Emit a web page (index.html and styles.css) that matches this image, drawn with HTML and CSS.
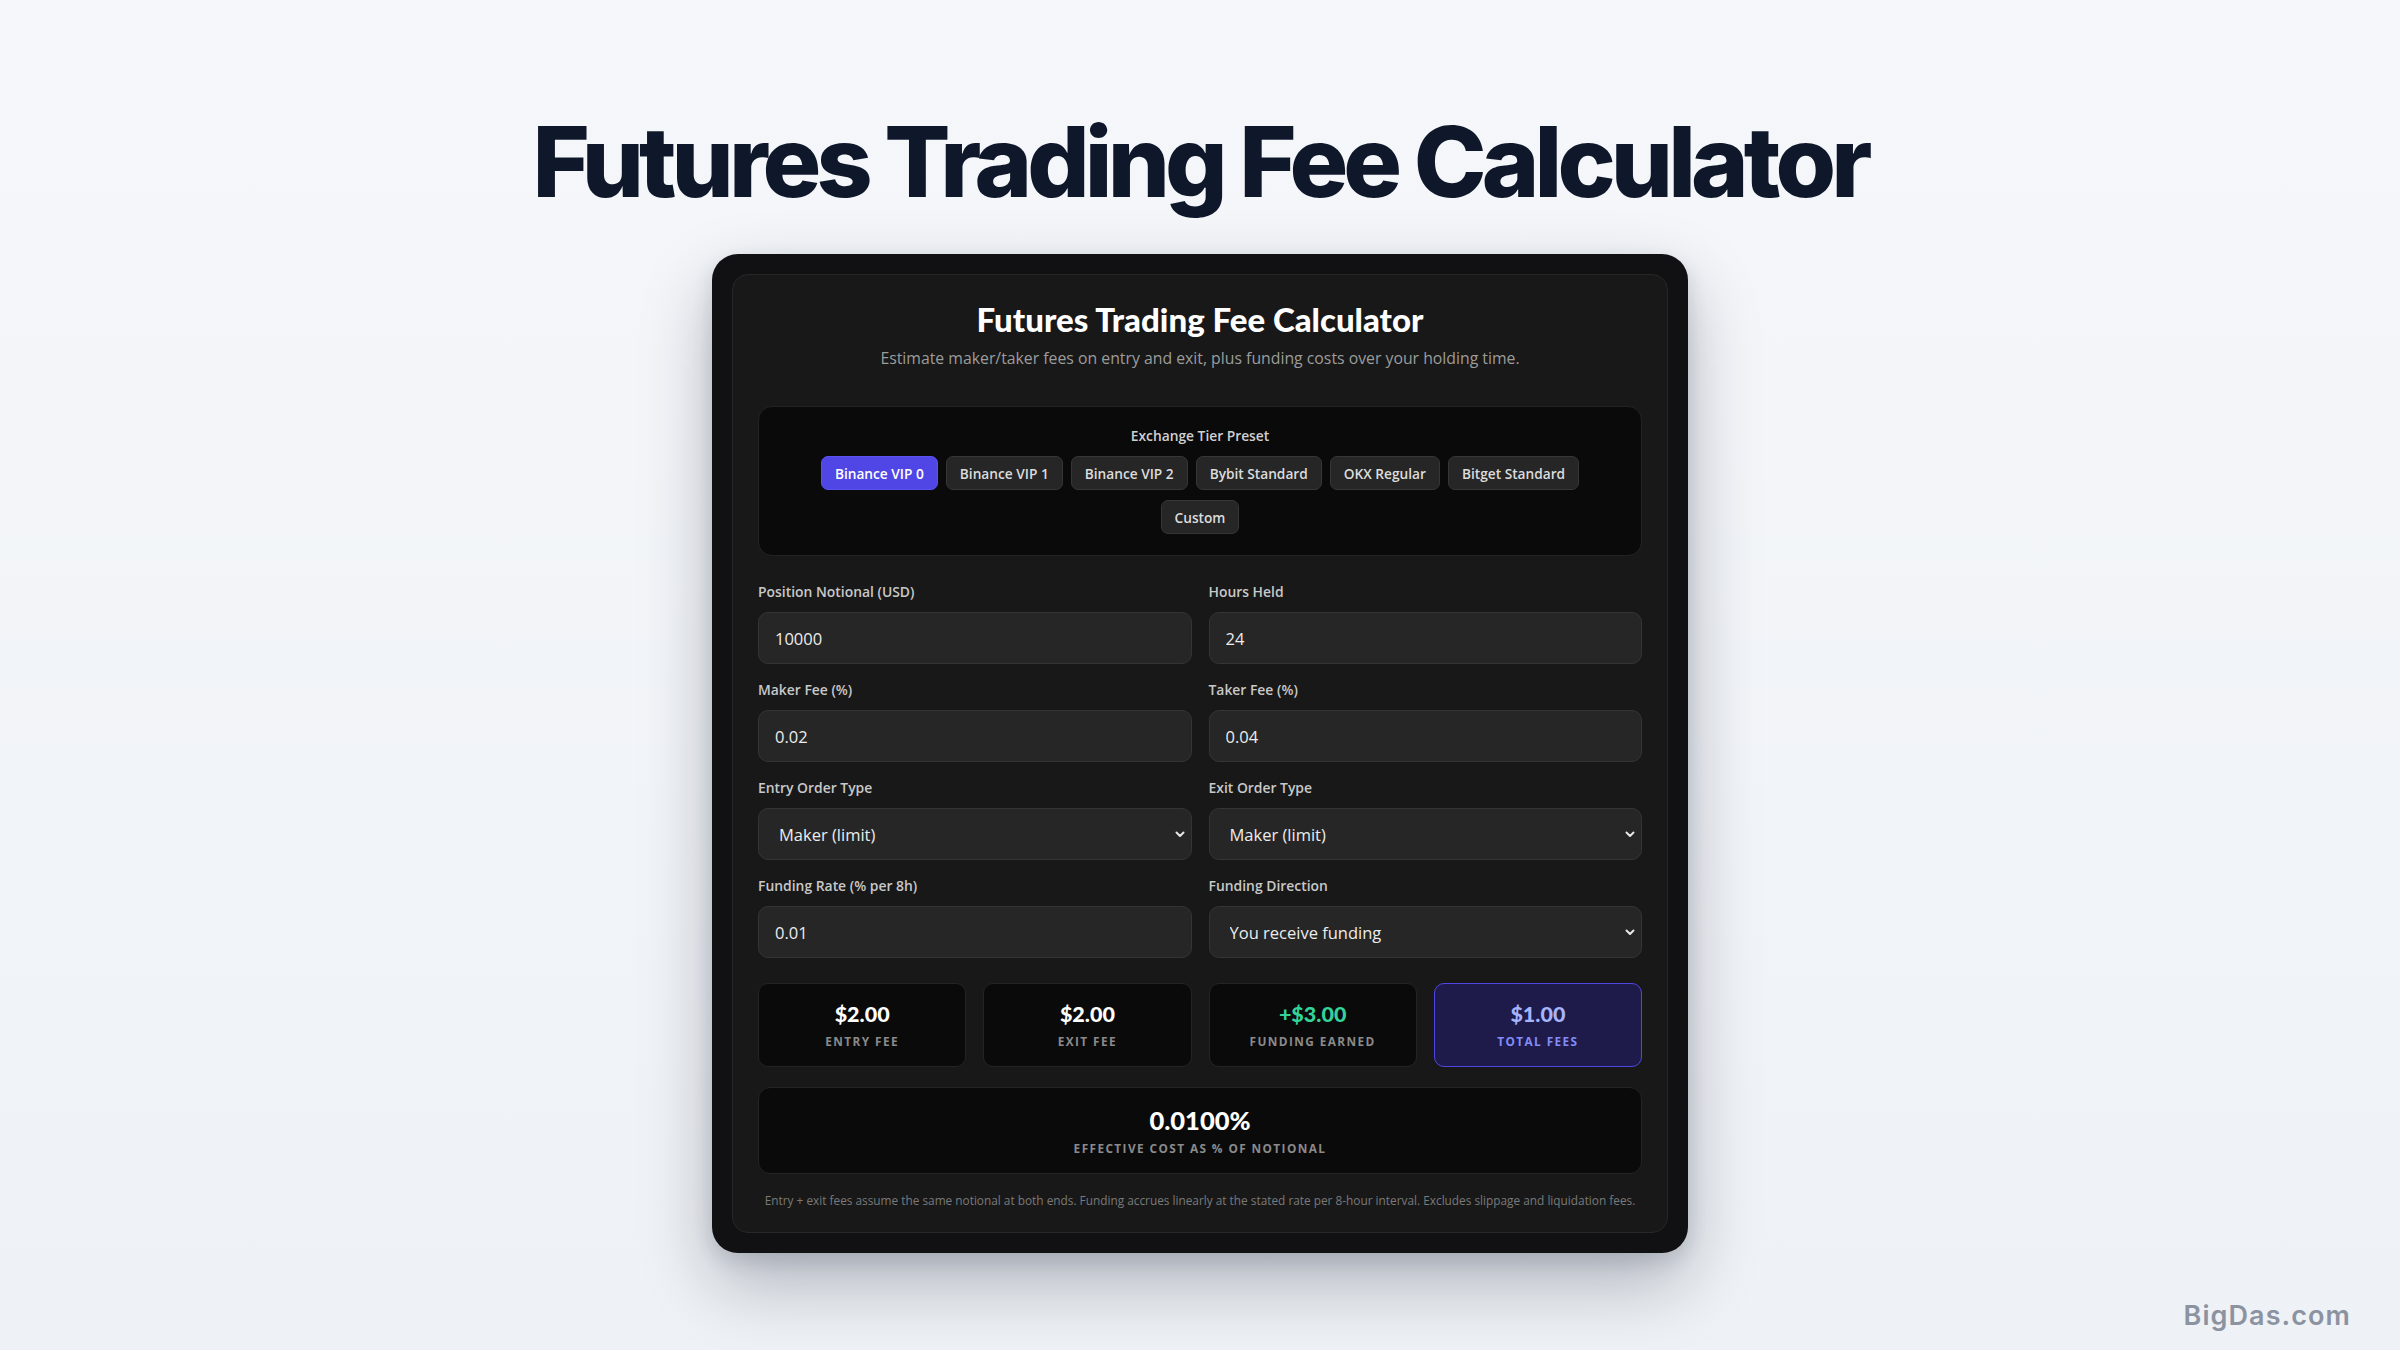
FILE: index.html
```html
<!DOCTYPE html>
<html lang="en">
<head>
<meta charset="utf-8">
<title>Futures Trading Fee Calculator</title>
<link rel="stylesheet" href="styles.css">
</head>
<body>
<main class="page">
  <h1 class="hero-title">Futures Trading Fee Calculator</h1>
  <div class="device">
    <div class="card">
      <header class="card-head">
        <h2 class="card-title">Futures Trading Fee Calculator</h2>
        <p class="card-sub">Estimate maker/taker fees on entry and exit, plus funding costs over your holding time.</p>
      </header>

      <section class="preset">
        <div class="preset-label">Exchange Tier Preset</div>
        <div class="preset-buttons">
          <button class="chip chip-active">Binance VIP 0</button>
          <button class="chip">Binance VIP 1</button>
          <button class="chip">Binance VIP 2</button>
          <button class="chip">Bybit Standard</button>
          <button class="chip">OKX Regular</button>
          <button class="chip">Bitget Standard</button>
          <button class="chip">Custom</button>
        </div>
      </section>

      <div class="fields">
        <div class="field">
          <label class="field-label">Position Notional (USD)</label>
          <input class="control" type="text" value="10000">
        </div>
        <div class="field">
          <label class="field-label">Hours Held</label>
          <input class="control" type="text" value="24">
        </div>
        <div class="field">
          <label class="field-label">Maker Fee (%)</label>
          <input class="control" type="text" value="0.02">
        </div>
        <div class="field">
          <label class="field-label">Taker Fee (%)</label>
          <input class="control" type="text" value="0.04">
        </div>
        <div class="field">
          <label class="field-label">Entry Order Type</label>
          <div class="select-wrap">
            <select class="control select"><option>Maker (limit)</option><option>Taker (market)</option></select>
            <svg class="chev" viewBox="0 0 12 12" width="12" height="12"><path d="M2.5 4.5 L6 8 L9.5 4.5" fill="none" stroke="#e6e6e6" stroke-width="2" stroke-linecap="round" stroke-linejoin="round"/></svg>
          </div>
        </div>
        <div class="field">
          <label class="field-label">Exit Order Type</label>
          <div class="select-wrap">
            <select class="control select"><option>Maker (limit)</option><option>Taker (market)</option></select>
            <svg class="chev" viewBox="0 0 12 12" width="12" height="12"><path d="M2.5 4.5 L6 8 L9.5 4.5" fill="none" stroke="#e6e6e6" stroke-width="2" stroke-linecap="round" stroke-linejoin="round"/></svg>
          </div>
        </div>
        <div class="field">
          <label class="field-label">Funding Rate (% per 8h)</label>
          <input class="control" type="text" value="0.01">
        </div>
        <div class="field">
          <label class="field-label">Funding Direction</label>
          <div class="select-wrap">
            <select class="control select"><option>You receive funding</option><option>You pay funding</option></select>
            <svg class="chev" viewBox="0 0 12 12" width="12" height="12"><path d="M2.5 4.5 L6 8 L9.5 4.5" fill="none" stroke="#e6e6e6" stroke-width="2" stroke-linecap="round" stroke-linejoin="round"/></svg>
          </div>
        </div>
      </div>

      <div class="stats">
        <div class="stat">
          <div class="stat-value">$2.00</div>
          <div class="stat-label">Entry Fee</div>
        </div>
        <div class="stat">
          <div class="stat-value">$2.00</div>
          <div class="stat-label">Exit Fee</div>
        </div>
        <div class="stat">
          <div class="stat-value stat-green">+$3.00</div>
          <div class="stat-label">Funding Earned</div>
        </div>
        <div class="stat stat-total">
          <div class="stat-value">$1.00</div>
          <div class="stat-label">Total Fees</div>
        </div>
      </div>

      <div class="effective">
        <div class="eff-value">0.0100%</div>
        <div class="stat-label">Effective Cost as % of Notional</div>
      </div>

      <p class="footnote">Entry + exit fees assume the same notional at both ends. Funding accrues linearly at the stated rate per 8-hour interval. Excludes slippage and liquidation fees.</p>
    </div>
  </div>
</main>
<div class="watermark">BigDas.com</div>
</body>
</html>
```

FILE: styles.css
```css
* { box-sizing: border-box; }

html, body {
  margin: 0;
  padding: 0;
}

body {
  width: 2400px;
  height: 1350px;
  overflow: hidden;
  background: linear-gradient(180deg, #f5f7fa 0%, #f1f4f8 60%, #eef1f5 100%);
  font-family: "Open Sans", "Lato", sans-serif;
  position: relative;
}

.page {
  display: flex;
  flex-direction: column;
  align-items: center;
  padding-top: 112px;
}

.hero-title {
  margin: 0;
  font-family: "Inter", sans-serif;
  font-weight: 800;
  font-size: 98px;
  line-height: 100px;
  letter-spacing: -0.05em;
  color: #0f172a;
}

.device {
  margin-top: 42px;
  width: 976px;
  padding: 20px;
  background: #111113;
  border-radius: 26px;
  box-shadow: 0 30px 70px rgba(15, 23, 42, 0.28), 0 8px 20px rgba(15, 23, 42, 0.12);
}

.card {
  background: #181818;
  border: 1px solid #272727;
  border-radius: 16px;
  padding: 25px 25px 24px;
  color: #e8e8e8;
}

.card-head {
  text-align: center;
}

.card-title {
  margin: 0;
  font-family: "Lato", sans-serif;
  font-weight: 900;
  font-size: 33px;
  line-height: 38px;
  color: #ffffff;
}

.card-sub {
  margin: 9px 0 0;
  font-size: 15.8px;
  line-height: 22px;
  color: #9c9c9c;
}

.preset {
  margin-top: 37px;
  background: #0a0a0a;
  border: 1px solid #232323;
  border-radius: 14px;
  padding: 19px 20px 21px;
  display: flex;
  flex-direction: column;
  align-items: center;
}

.preset-label {
  font-size: 13.8px;
  line-height: 20px;
  font-weight: 600;
  color: #d0d0d0;
}

.preset-buttons {
  margin-top: 10px;
  display: flex;
  flex-wrap: wrap;
  justify-content: center;
  gap: 10px 8px;
  width: 820px;
}

.chip {
  height: 34px;
  padding: 0 13px;
  border-radius: 7px;
  border: 1px solid #363636;
  background: #262626;
  color: #dcdcdc;
  font-family: "Open Sans", sans-serif;
  font-size: 13.7px;
  font-weight: 600;
}

.chip-active {
  background: #4f46e5;
  border-color: #5b53ef;
  color: #ffffff;
}

.fields {
  margin-top: 26px;
  display: grid;
  grid-template-columns: 1fr 1fr;
  gap: 16px 17px;
}

.field {
  display: flex;
  flex-direction: column;
}

.field-label {
  font-size: 13.9px;
  line-height: 20px;
  font-weight: 600;
  color: #c8c8c8;
  margin-bottom: 10px;
}

.control {
  width: 100%;
  height: 52px;
  background: #262626;
  border: 1px solid #343434;
  border-radius: 10px;
  color: #ececec;
  font-family: "Open Sans", sans-serif;
  font-size: 16.5px;
  padding: 0 16px;
  outline: none;
}

.select-wrap {
  position: relative;
}

.select {
  appearance: none;
  -webkit-appearance: none;
  padding-left: 20px;
}

.chev {
  position: absolute;
  right: 6px;
  top: 20px;
}

.stats {
  margin-top: 25px;
  display: grid;
  grid-template-columns: repeat(4, 1fr);
  gap: 17px;
}

.stat {
  height: 84px;
  background: #0a0a0a;
  border: 1px solid #242424;
  border-radius: 10px;
  display: flex;
  flex-direction: column;
  align-items: center;
  justify-content: center;
  gap: 8px;
}

.stat-value {
  font-family: "Lato", sans-serif;
  font-size: 21.5px;
  line-height: 24px;
  font-weight: 900;
  color: #ffffff;
}

.stat-green { color: #34d399; }

.stat-label {
  font-size: 11.8px;
  line-height: 14px;
  font-weight: 700;
  letter-spacing: 0.12em;
  text-transform: uppercase;
  color: #8a8a8a;
}

.stat-total {
  background: #1e1b4b;
  border-color: #4f46e5;
}

.stat-total .stat-value { color: #a5b4fc; }
.stat-total .stat-label { color: #818cf8; }

.effective {
  margin-top: 20px;
  height: 87px;
  background: #0a0a0a;
  border: 1px solid #242424;
  border-radius: 12px;
  display: flex;
  flex-direction: column;
  align-items: center;
  justify-content: center;
  gap: 7px;
}

.eff-value {
  font-family: "Lato", sans-serif;
  font-size: 25.5px;
  line-height: 28px;
  font-weight: 900;
  color: #ffffff;
}

.footnote {
  margin: 18px 0 0;
  text-align: center;
  font-size: 11.84px;
  line-height: 16px;
  color: #7a7a7a;
}

.watermark {
  position: absolute;
  right: 49px;
  bottom: 18px;
  font-family: "Inter", sans-serif;
  font-size: 27px;
  font-weight: 600;
  letter-spacing: 0.04em;
  color: #8b93a1;
}
```
